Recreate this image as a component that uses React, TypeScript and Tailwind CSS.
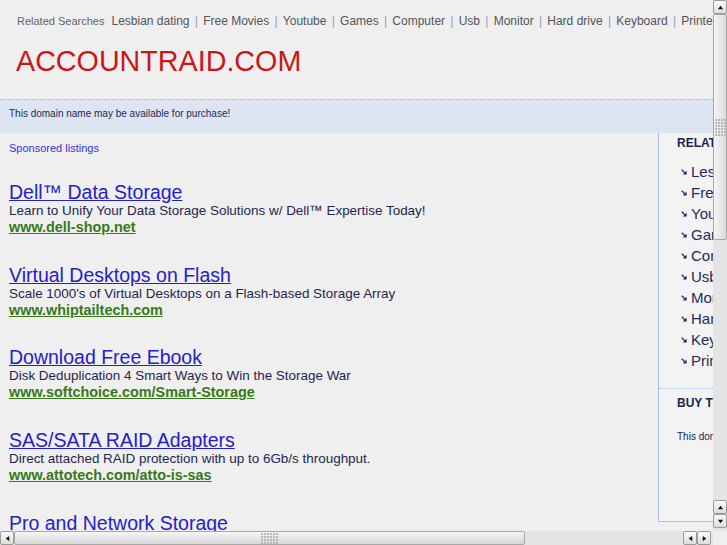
import React from 'react';

const related = ['Lesbian dating', 'Free Movies', 'Youtube', 'Games', 'Computer', 'Usb', 'Monitor', 'Hard drive', 'Keyboard', 'Printer'];

const listings = [
  { title: 'Dell™ Data Storage', desc: 'Learn to Unify Your Data Storage Solutions w/ Dell™ Expertise Today!', url: 'www.dell-shop.net' },
  { title: 'Virtual Desktops on Flash', desc: "Scale 1000's of Virtual Desktops on a Flash-based Storage Array", url: 'www.whiptailtech.com' },
  { title: 'Download Free Ebook', desc: 'Disk Deduplication 4 Smart Ways to Win the Storage War', url: 'www.softchoice.com/Smart-Storage' },
  { title: 'SAS/SATA RAID Adapters', desc: 'Direct attached RAID protection with up to 6Gb/s throughput.', url: 'www.attotech.com/atto-is-sas' },
  { title: 'Pro and Network Storage', desc: 'Enterprise-class storage for small and medium business.', url: 'www.netstorage.com' },
];

// tiny triangle used on the scrollbar buttons
function Arrow({ dir }: { dir: 'up' | 'down' | 'left' | 'right' }) {
  const pts = {
    up: '1,6 4,2 7,6',
    down: '1,2 4,6 7,2',
    left: '6,1 2,4 6,7',
    right: '2,1 6,4 2,7',
  }[dir];
  return (
    <svg viewBox="0 0 8 8" className="h-[7px] w-[7px]">
      <polygon points={pts} fill="#111" />
    </svg>
  );
}

function ScrollButton({ dir }: { dir: 'up' | 'down' | 'left' | 'right' }) {
  return (
    <div className="w-[14px] h-[14px] shrink-0 flex items-center justify-center border border-[#9a9a9a] rounded-[2px] bg-gradient-to-b from-[#fbfbfb] to-[#dcdcdc]">
      <Arrow dir={dir} />
    </div>
  );
}

function Grip({ vertical }: { vertical?: boolean }) {
  return (
    <div className={`grid gap-[1px] ${vertical ? 'grid-cols-4' : 'grid-cols-6'}`}>
      {Array.from({ length: 24 }).map((_, i) => (
        <span key={i} className="w-[2px] h-[2px] bg-[#b8b8b8]" />
      ))}
    </div>
  );
}

function SideArrow() {
  return (
    <svg viewBox="0 0 6 6" className="h-[6px] w-[6px] shrink-0">
      <path d="M0.8 0.8 L4.6 4.6" stroke="#1f2a5c" strokeWidth="1.3" />
      <polygon points="5.6,1.8 5.6,5.6 1.8,5.6" fill="#1f2a5c" />
    </svg>
  );
}

export default function App() {
  return (
    <div className="w-[727px] h-[545px] overflow-hidden flex flex-col bg-[#efefef] font-['Liberation_Sans',Arial,sans-serif]">
      <div className="flex h-[531px]">
        {/* viewport */}
        <div className="w-[713px] h-[531px] overflow-hidden">
          <div className="w-[933px]">
            {/* related searches bar */}
            <div className="h-[42px] flex items-center pl-[17px] whitespace-nowrap">
              <span className="text-[11px] text-[#666] mr-[7px]">Related Searches</span>
              {related.map((r, i) => (
                <span key={r} className="flex items-center text-[12px] text-[#555]">
                  {i > 0 && <span className="mx-[5.25px] text-[#8fa0c0]">|</span>}
                  {r}
                </span>
              ))}
            </div>

            {/* logo */}
            <div className="h-[57px] pl-[16px] pt-[3px]">
              <div className="text-[28.7px] leading-[32px] text-[#cc1616]">ACCOUNTRAID.COM</div>
            </div>

            {/* domain notice */}
            <div className="h-[34px] border-t border-dotted border-[#9fb0cc] bg-[#dde5f3] pl-[9px] pt-[8px]">
              <div className="text-[10px] leading-[12px] text-[#1a2a55]">This domain name may be available for purchase!</div>
            </div>

            <div className="flex">
              {/* listings */}
              <div className="w-[658px] pl-[9px] pt-[8px]">
                <div className="text-[11px] leading-[14px] text-[#3333dd]">Sponsored listings</div>
                <div className="mt-[26px] flex flex-col">
                  {listings.map((l) => (
                    <div key={l.title} className="mb-[28.67px]">
                      <div className="text-[19.5px] leading-[22px] text-[#2222cc] underline">{l.title}</div>
                      <div className="text-[13.45px] leading-[16px] text-[#1e2650]">{l.desc}</div>
                      <div className="text-[14.4px] leading-[16px] font-bold text-[#367a18] underline">{l.url}</div>
                    </div>
                  ))}
                </div>
              </div>

              {/* sidebar */}
              <div className="w-[275px] h-[389px] border-l border-b border-[#a8c0e8] bg-[#f3f3f3] shrink-0">
                <div className="pl-[18px] pt-[2px]">
                  <div className="text-[12px] leading-[16px] font-bold text-[#1a2450] whitespace-nowrap">RELATED SEARCHES</div>
                  <ul className="mt-[10px] pl-[4px]">
                    {related.map((r) => (
                      <li key={r} className="flex items-center gap-[4px] text-[15px] leading-[21px] text-[#1f2a5c]">
                        <SideArrow />
                        {r}
                      </li>
                    ))}
                  </ul>
                </div>
                <div className="mt-[17px] border-t border-dotted border-[#a8c0e8] pl-[18px] pt-[6px]">
                  <div className="text-[12px] leading-[16px] font-bold text-[#1a2450] whitespace-nowrap">BUY THIS DOMAIN</div>
                  <div className="mt-[20px] text-[10px] leading-[12px] text-[#1a2450] whitespace-nowrap">This domain may be for sale. Buy it today!</div>
                </div>
              </div>
            </div>
          </div>
        </div>

        {/* vertical scrollbar */}
        <div className="w-[14px] h-[531px] flex flex-col bg-[#e4e4e4]">
          <ScrollButton dir="up" />
          <div className="h-[226px] flex items-center justify-center border border-[#a8a8a8] rounded-[2px] bg-gradient-to-r from-[#f6f6f6] to-[#dadada]">
            <Grip vertical />
          </div>
          <div className="flex-1" />
          <ScrollButton dir="up" />
          <ScrollButton dir="down" />
          <div className="h-[3px]" />
        </div>
      </div>

      {/* horizontal scrollbar */}
      <div className="flex h-[14px]">
        <div className="w-[713px] flex bg-[#e4e4e4]">
          <ScrollButton dir="left" />
          <div className="w-[511px] flex items-center justify-center border border-[#a8a8a8] rounded-[2px] bg-gradient-to-b from-[#f6f6f6] to-[#d6d6d6]">
            <Grip />
          </div>
          <div className="flex-1" />
          <ScrollButton dir="left" />
          <ScrollButton dir="right" />
          <div className="w-[2px]" />
        </div>
        <div className="flex-1 bg-[#efefef]" />
      </div>
    </div>
  );
}
